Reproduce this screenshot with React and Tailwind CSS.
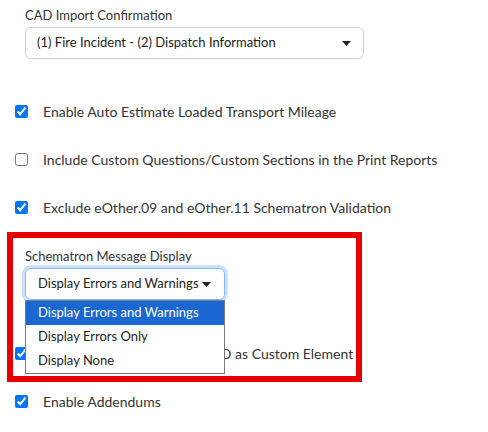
import { useState } from 'react'

const Caret = () => (
  <svg width="9" height="5" viewBox="0 0 9 5" className="shrink-0">
    <path d="M0 0h9L4.5 5z" fill="#222" />
  </svg>
)

function CheckRow({ label, checked }) {
  return (
    <label className="flex items-center h-6 pl-[15px] gap-[15px]">
      <input type="checkbox" defaultChecked={checked} className="m-0 w-[13px] h-[13px]" />
      <span className="text-[14px] text-[#333]">{label}</span>
    </label>
  )
}

const displayOptions = ['Display Errors and Warnings', 'Display Errors Only', 'Display None']

export default function App() {
  const [selected] = useState(0)

  return (
    <div className="relative w-[488px] h-[432px] bg-white font-['Lato','Liberation_Sans',sans-serif] overflow-hidden">
      <div className="flex flex-col pt-[7px] pl-[25px]">
        {/* CAD import */}
        <div className="text-[13px] leading-4 text-[#333]">CAD Import Confirmation</div>
        <div className="mt-1 w-[339px] h-8 flex items-center justify-between pl-[11px] pr-[12px] border border-[#d0d0d0] rounded-[6px] text-[13px] text-[#222]">
          <span>(1) Fire Incident - (2) Dispatch Information</span>
          <Caret />
        </div>
      </div>

      <div className="flex flex-col mt-[40px] gap-6">
        <CheckRow label="Enable Auto Estimate Loaded Transport Mileage" checked />
        <CheckRow label="Include Custom Questions/Custom Sections in the Print Reports" />
        <CheckRow label="Exclude eOther.09 and eOther.11 Schematron Validation" checked />
      </div>

      {/* Schematron select, opened */}
      <div className="flex flex-col mt-[29px] pl-[25px]">
        <div className="text-[13px] leading-4 text-[#333]">Schematron Message Display</div>
        <div className="relative mt-1 w-[200px]">
          <div className="h-8 flex items-center justify-between pl-3 pr-[13px] border border-[#86b7fe] rounded-[6px] shadow-[0_0_0_3px_rgba(13,110,253,0.22)] text-[13px] text-[#222]">
            <span>{displayOptions[selected]}</span>
            <Caret />
          </div>
          <ul className="absolute left-0 top-8 z-10 w-[200px] bg-white border border-[#7a7a7a] text-[13px] text-[#222]">
            {displayOptions.map((opt, i) => (
              <li
                key={opt}
                className={`h-6 flex items-center pl-3 ${i === selected ? 'bg-[#1a67d2] text-white' : ''}`}
              >
                {opt}
              </li>
            ))}
          </ul>
        </div>
      </div>

      <div className="flex flex-col mt-[41px] gap-6">
        <CheckRow label="Export Incident No. & ePCR ID as Custom Element" checked />
        <CheckRow label="Enable Addendums" checked />
      </div>

      {/* highlight frame */}
      <div className="absolute left-[7px] top-[232px] w-[355px] h-[150px] border-[6px] border-[#e60000] pointer-events-none z-20" />
    </div>
  )
}
